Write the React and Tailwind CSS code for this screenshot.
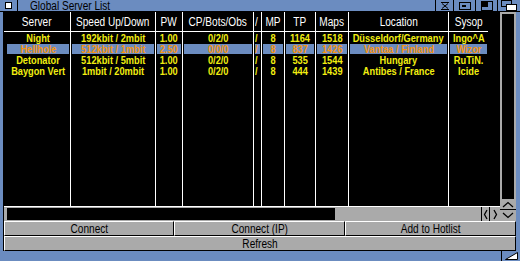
import React from "react";

const servers = [
  { name: "Night", speed: "192kbit / 2mbit", pw: "1.00", cp: "0/2/0", mp: "8", tp: "1164", maps: "1518", loc: "Düsseldorf/Germany", sysop: "Ingo^A" },
  { name: "Hellhole", speed: "512kbit / 1mbit", pw: "2.50", cp: "0/0/0", mp: "8", tp: "837", maps: "1426", loc: "Vantaa / Finland", sysop: "Wizor", sel: true },
  { name: "Detonator", speed: "512kbit / 5mbit", pw: "1.00", cp: "0/2/0", mp: "8", tp: "535", maps: "1544", loc: "Hungary", sysop: "RuTiN." },
  { name: "Baygon Vert", speed: "1mbit / 20mbit", pw: "1.00", cp: "0/2/0", mp: "8", tp: "444", maps: "1439", loc: "Antibes / France", sysop: "Icide" },
];

const columns = [
  { key: "name", title: "Server", w: "w-[67px]", first: true },
  { key: "speed", title: "Speed Up/Down", w: "w-[85px]" },
  { key: "pw", title: "PW", w: "w-[27px]" },
  { key: "cp", title: "CP/Bots/Obs", w: "w-[71px]" },
  { key: "slash", title: "/", w: "w-[8px]", left: true },
  { key: "mp", title: "MP", w: "w-[23px]" },
  { key: "tp", title: "TP", w: "w-[31px]" },
  { key: "maps", title: "Maps", w: "w-[33px]" },
  { key: "loc", title: "Location", w: "w-[100px]" },
  { key: "sysop", title: "Sysop", w: "w-[42px]", last: true },
];

function Txt({ children, className = "" }) {
  return (
    <span className={"inline-block whitespace-nowrap scale-x-[0.84] " + className}>
      {children}
    </span>
  );
}

function Column({ col }) {
  return (
    <div
      className={
        "flex flex-col shrink-0 overflow-hidden " +
        col.w +
        (col.last ? " pr-[3px]" : " border-r border-white")
      }
    >
      <div
        className={
          "h-[20px] border-b border-white flex items-center text-white text-[12px] " +
          (col.left ? "justify-start pl-[1px]" : "justify-center")
        }
      >
        <Txt className={col.left ? "origin-left" : ""}>{col.title}</Txt>
      </div>
      <div className="pt-[1px]">
        {servers.map((s, i) => (
          <div
            key={i}
            className={"h-[11px] pb-[1px] " + (col.first ? "pl-[3px] pr-[1px]" : "px-[1px]")}
          >
            <div
              className={
                "h-full flex items-center text-[11px] font-bold " +
                (col.left ? "justify-start " : "justify-center ") +
                (s.sel ? "bg-[#6b8cc0] text-[#f7950f]" : "text-[#f2ee10]")
              }
            >
              <Txt className={col.left ? "origin-left" : ""}>
                {col.key === "slash" ? "/" : s[col.key]}
              </Txt>
            </div>
          </div>
        ))}
      </div>
    </div>
  );
}

function Button({ children, className = "" }) {
  return (
    <div
      className={
        "h-[15px] bg-[#aaaaaa] border-t border-l border-white border-b border-r border-b-black border-r-black flex items-center justify-center text-black text-[12px] " +
        className
      }
    >
      <Txt>{children}</Txt>
    </div>
  );
}

export default function App() {
  return (
    <div className="w-[520px] h-[261px] bg-[#6b8cc0] flex flex-col overflow-hidden font-['Liberation_Sans',Arial,sans-serif] leading-none select-none">
      {/* title bar */}
      <div className="h-[12px] flex shrink-0 border-b border-black">
        <div className="w-[18px] border-r border-black flex items-center justify-center">
          <div className="w-[7px] h-[7px] border border-black bg-white" />
        </div>
        <div className="flex-1 flex items-center pl-[12px] text-black text-[12px]">
          <Txt className="origin-left">Global Server List</Txt>
        </div>
        <div className="w-[18px] border-l border-black flex items-center justify-center">
          <svg width="12" height="10" viewBox="0 0 12 10">
            <path d="M2 1.5h8M3 2.5l3 2.5l3 -2.5M2 8.5h8M3 7.5l3 -2.5l3 2.5" stroke="black" strokeWidth="1" fill="none" />
          </svg>
        </div>
        <div className="w-[22px] border-l border-black flex items-center justify-center">
          <svg width="14" height="10" viewBox="0 0 14 10">
            <rect x="1.5" y="1.5" width="11" height="7" fill="none" stroke="black" />
            <rect x="4" y="4" width="4" height="2" fill="black" />
          </svg>
        </div>
        <div className="w-[22px] border-l border-black flex items-center justify-center">
          <svg width="14" height="10" viewBox="0 0 14 10">
            <rect x="1.5" y="0.5" width="11" height="9" fill="none" stroke="black" />
            <rect x="2" y="1" width="6" height="5" fill="black" />
          </svg>
        </div>
        <div className="w-[23px] border-l border-black flex items-center justify-center">
          <svg width="18" height="11" viewBox="0 0 18 11">
            <rect x="1.5" y="0.5" width="10" height="6" fill="#6b8cc0" stroke="black" />
            <rect x="6.5" y="4.5" width="10" height="6" fill="white" stroke="black" />
          </svg>
        </div>
      </div>

      {/* body */}
      <div className="flex h-[239px] shrink-0">
        <div className="w-[4px] border-r border-black" />
        <div className="flex-1 flex flex-col">
          <div className="flex h-[209px]">
            <div className="w-[496px] flex flex-col">
              <div className="h-[194px] bg-black flex">
                {columns.map((c) => (
                  <Column key={c.key} col={c} />
                ))}
              </div>
              <div className="h-[15px] flex">
                <div className="w-[477px] bg-[#aaaaaa] border-t border-white px-[3px] py-[1px] flex">
                  <div className="w-[328px] h-full bg-black" />
                </div>
                <div className="w-[19px] bg-[#aaaaaa] border-t border-white flex">
                  <div className="w-[9px] border-l border-r border-black flex items-center justify-center">
                    <svg width="5" height="11" viewBox="0 0 5 11">
                      <path d="M4 1L1.5 5.5L4 10" stroke="black" strokeWidth="1.3" fill="none" />
                    </svg>
                  </div>
                  <div className="w-[10px] flex items-center justify-center">
                    <svg width="5" height="11" viewBox="0 0 5 11">
                      <path d="M1 1L3.5 5.5L1 10" stroke="black" strokeWidth="1.3" fill="none" />
                    </svg>
                  </div>
                </div>
              </div>
            </div>
            <div className="w-[16px] flex flex-col">
              <div className="h-[188px] bg-black border-x-2 border-t-2 border-b border-[#aaaaaa]" />
              <div className="h-[10px] bg-[#aaaaaa] border-b border-black flex items-center justify-center">
                <svg width="12" height="7" viewBox="0 0 12 7">
                  <path d="M1 6L6 1.5L11 6" stroke="black" strokeWidth="1.3" fill="none" />
                </svg>
              </div>
              <div className="h-[11px] bg-[#aaaaaa] flex items-center justify-center">
                <svg width="12" height="7" viewBox="0 0 12 7">
                  <path d="M1 1L6 5.5L11 1" stroke="black" strokeWidth="1.3" fill="none" />
                </svg>
              </div>
            </div>
          </div>
          <div className="flex">
            <Button className="w-[170px]">Connect</Button>
            <Button className="w-[171px]">Connect (IP)</Button>
            <Button className="flex-1">Add to Hotlist</Button>
          </div>
          <Button>Refresh</Button>
        </div>
        <div className="w-[4px]" />
      </div>

      {/* bottom border */}
      <div className="flex-1 flex justify-end">
        <div className="w-[19px] border-l border-black flex items-end justify-end">
          <svg width="18" height="10" viewBox="0 0 18 10">
            <path d="M15.5 1.5V8.5H3.5Z" fill="white" stroke="black" />
          </svg>
        </div>
      </div>
    </div>
  );
}
